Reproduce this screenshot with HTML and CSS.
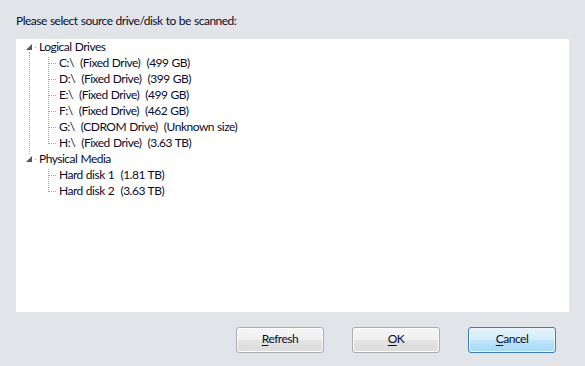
FILE: index.html
```html
<!DOCTYPE html>
<html>
<head>
<meta charset="utf-8">
<title>Select source drive</title>
<link rel="stylesheet" href="styles.css">
</head>
<body>
<div class="dialog">
  <div class="prompt">Please select source drive/disk to be scanned:</div>
  <div class="panel">
    <div class="tree">
      <div class="root">
        <svg class="arrow" width="6" height="6" viewBox="0 0 6 6"><polygon points="6,0 6,6 0,6" fill="#595959"/></svg>
        <span class="dot"></span>
        <span class="label">Logical Drives</span>
      </div>
      <div class="children n6">
        <div class="child"><span class="label">C:\  (Fixed Drive)  (499 GB)</span></div>
        <div class="child"><span class="label">D:\  (Fixed Drive)  (399 GB)</span></div>
        <div class="child"><span class="label">E:\  (Fixed Drive)  (499 GB)</span></div>
        <div class="child"><span class="label">F:\  (Fixed Drive)  (462 GB)</span></div>
        <div class="child"><span class="label">G:\  (CDROM Drive)  (Unknown size)</span></div>
        <div class="child"><span class="label">H:\  (Fixed Drive)  (3.63 TB)</span></div>
      </div>
      <div class="root">
        <svg class="arrow" width="6" height="6" viewBox="0 0 6 6"><polygon points="6,0 6,6 0,6" fill="#595959"/></svg>
        <span class="dot"></span>
        <span class="label">Physical Media</span>
      </div>
      <div class="children n2">
        <div class="child"><span class="label">Hard disk 1  (1.81 TB)</span></div>
        <div class="child"><span class="label">Hard disk 2  (3.63 TB)</span></div>
      </div>
    </div>
  </div>
  <div class="buttons">
    <button class="btn"><u>R</u>efresh</button>
    <button class="btn"><u>O</u>K</button>
    <button class="btn default"><u>C</u>ancel</button>
  </div>
</div>
</body>
</html>
```
FILE: styles.css
```css
html, body {
  margin: 0;
  padding: 0;
}
body {
  background: #e1e4e8;
  font-family: Lato, "Noto Sans", sans-serif;
  font-size: 12px;
  letter-spacing: -0.5px;
  word-spacing: 0.5px;
  color: #0c0c2a;
  width: 585px;
  height: 366px;
  overflow: hidden;
}
.dialog {
  display: flex;
  flex-direction: column;
  height: 366px;
}
.prompt {
  height: 16px;
  line-height: 16px;
  padding: 13px 0 0 16px;
  margin-bottom: 10px;
}
.panel {
  margin: 0 16px 0 16px;
  height: 273px;
  background: #fff;
}
.tree {
  position: relative;
  padding-left: 10px;
}
.tree::before {
  content: "";
  position: absolute;
  left: 13px;
  top: 13px;
  height: 102px;
  border-left: 1px dotted #a0a0a0;
}
.root {
  position: relative;
  display: flex;
  align-items: center;
  height: 16px;
  line-height: 16px;
}
.arrow {
  display: block;
  width: 6px;
  height: 6px;
  background: #fff;
  position: relative;
  z-index: 1;
  box-shadow: 0 0 0 1px #fff;
}
.dot {
  width: 1px;
  height: 1px;
  background: #a0a0a0;
  margin: 1px 3px 0 3px;
}
.label {
  white-space: pre;
}
.children {
  position: relative;
  padding-left: 33px;
}
.children::before {
  content: "";
  position: absolute;
  left: 22px;
  top: 2px;
  border-left: 1px dotted #a0a0a0;
}
.n6::before { height: 87px; }
.n2::before { height: 23px; }
.child {
  position: relative;
  height: 16px;
  line-height: 16px;
}
.child::before {
  content: "";
  position: absolute;
  left: -11px;
  top: 8px;
  width: 8px;
  border-top: 1px dotted #a0a0a0;
}
.buttons {
  display: flex;
  justify-content: flex-end;
  gap: 28px;
  padding: 15px 29px 0 0;
}
.btn {
  box-sizing: border-box;
  width: 88px;
  height: 26px;
  border: 1px solid #acacac;
  border-radius: 3px;
  box-shadow: inset 0 0 0 1px #fcfcfc;
  background: linear-gradient(to bottom, #f6f6f6 0%, #efefef 48%, #e3e3e3 52%, #dcdcdc 100%);
  font: inherit;
  letter-spacing: inherit;
  word-spacing: inherit;
  color: #0c0c2a;
  padding: 0 0 2px 0;
  line-height: 22px;
}
.btn u {
  text-decoration-thickness: 1px;
  text-underline-offset: 2px;
}
.btn.default {
  border-color: #3c7fb1;
  box-shadow: inset 0 0 0 1px #eaf6fd;
  background: linear-gradient(to bottom, #e5f4fc 0%, #d5edfb 48%, #bee5fb 52%, #a6d9f6 100%);
}
```
